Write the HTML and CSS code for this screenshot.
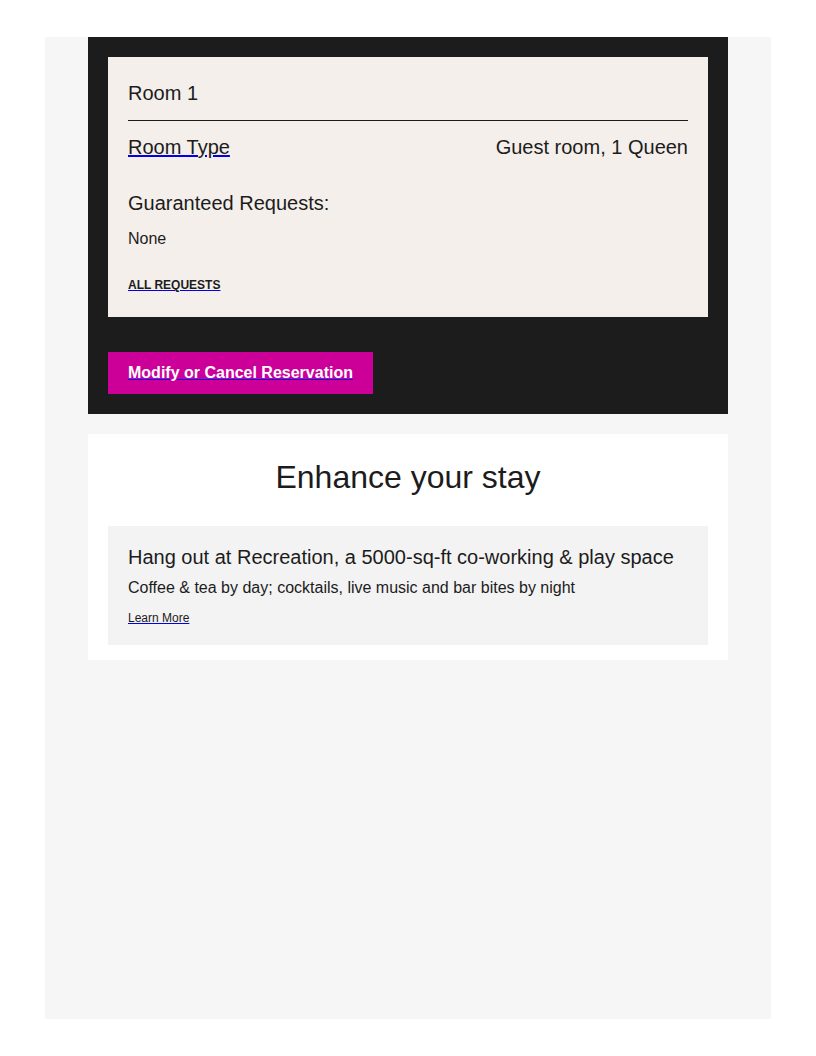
FILE: index.html
```html
<!DOCTYPE html>
<html>
<head>
    <title>Your Reservation</title>
    <link rel="stylesheet" href="styles.css">
</head>
<body>
    <div class="page">
        <div class="reservation">
            <div class="room-card">
                <div class="room-title">Room 1</div>
                <div class="room-row">
                    <a href="#" class="room-link"><span>Room Type</span></a>
                    <span>Guest room, 1 Queen</span>
                </div>
                <div class="requests-title">Guaranteed Requests:</div>
                <div class="requests-value">None</div>
                <div class="requests-link"><a href="#"><span>ALL REQUESTS</span></a></div>
            </div>
            <div class="actions">
                <a href="#" class="modify-btn"><span>Modify or Cancel Reservation</span></a>
            </div>
        </div>

        <div class="enhance">
            <h2>Enhance your stay</h2>
            <div class="offer">
                <div class="offer-title">Hang out at Recreation, a 5000-sq-ft co-working &amp; play space</div>
                <div class="offer-text">Coffee &amp; tea by day; cocktails, live music and bar bites by night</div>
                <div class="offer-link"><a href="#"><span>Learn More</span></a></div>
            </div>
        </div>
    </div>
</body>
</html>
```

FILE: styles.css
```css
* {
    box-sizing: border-box;
}

html, body {
    background: #ffffff;
}

body {
    margin: 0;
    font-family: 'Liberation Sans', Arial, sans-serif;
    color: #1c1c1c;
}

a {
    color: #0000ee;
    text-decoration: underline;
}

a span {
    color: #1c1c1c;
}

.page {
    width: 726px;
    min-height: 982px;
    margin: 37px auto 0;
    padding: 0 43px;
    background: #f6f6f6;
}

.reservation {
    background: #1c1c1c;
    padding: 20px 20px 20px;
}

.room-card {
    background: #f4efeb;
    padding: 25px 20px 25px;
}

.room-title {
    font-size: 20px;
    line-height: 23px;
    padding-bottom: 15px;
    border-bottom: 1px solid #1c1c1c;
}

.room-row {
    display: flex;
    justify-content: space-between;
    margin-top: 15px;
    font-size: 20px;
    line-height: 23px;
}

.requests-title {
    margin-top: 33px;
    font-size: 20px;
    line-height: 23px;
}

.requests-value {
    margin-top: 15px;
    font-size: 16px;
    line-height: 18px;
}

.requests-link {
    margin-top: 30px;
    font-size: 12px;
    line-height: 14px;
    font-weight: bold;
}

.actions {
    display: flex;
    margin-top: 35px;
}

.modify-btn {
    background: #cc0099;
    padding: 12px 20px;
    font-size: 16px;
    line-height: 18px;
    font-weight: bold;
}

.modify-btn span {
    color: #ffffff;
}

.enhance {
    margin-top: 20px;
    background: #ffffff;
    padding: 25px 20px 15px;
}

.enhance h2 {
    margin: 0;
    font-size: 32px;
    line-height: 37px;
    font-weight: normal;
    text-align: center;
}

.offer {
    margin-top: 30px;
    background: #f3f3f3;
    padding: 20px;
}

.offer-title {
    font-size: 20px;
    line-height: 23px;
}

.offer-text {
    margin-top: 10px;
    font-size: 16px;
    line-height: 18px;
}

.offer-link {
    margin-top: 14px;
    font-size: 12px;
    line-height: 14px;
}
```
